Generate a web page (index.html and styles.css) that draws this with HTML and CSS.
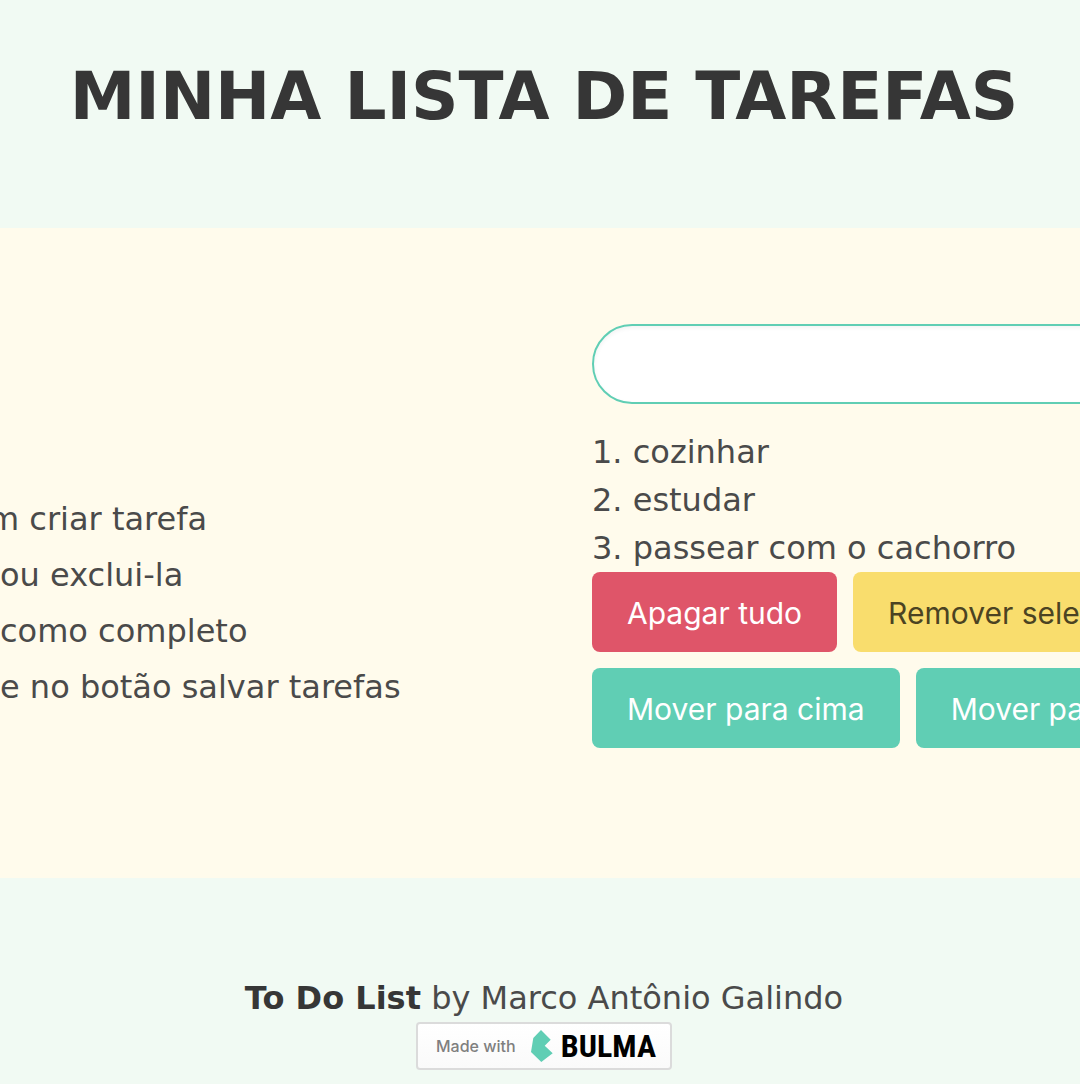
FILE: index.html
```html
<!DOCTYPE html>
<html lang="pt-BR">
<head>
<meta charset="utf-8">
<meta name="viewport" content="width=device-width, initial-scale=1">
<title>Minha Lista de Tarefas</title>
<link rel="stylesheet" href="styles.css">
</head>
<body>
<header class="hero">
  <h1 class="title">MINHA LISTA DE TAREFAS</h1>
</header>
<main class="board">
  <ul class="tips">
    <li class="tip-cut">m criar tarefa</li>
    <li>ou exclui-la</li>
    <li>como completo</li>
    <li>e no botão salvar tarefas</li>
  </ul>
  <section class="tasks">
    <input class="task-input" type="text" aria-label="Nova tarefa">
    <ol class="task-list">
      <li>cozinhar</li>
      <li>estudar</li>
      <li>passear com o cachorro</li>
    </ol>
    <div class="buttons">
      <button class="button danger" type="button">Apagar tudo</button>
      <button class="button warning" type="button">Remover sele</button>
    </div>
    <div class="buttons">
      <button class="button primary" type="button">Mover para cima</button>
      <button class="button primary" type="button">Mover pa</button>
    </div>
  </section>
</main>
<footer class="footer">
  <p class="credit"><strong>To Do List</strong> by Marco Antônio Galindo</p>
  <a class="badge" href="https://bulma.io">
    <span class="badge-note">Made with</span>
    <svg class="badge-mark" viewBox="0 0 22 32" aria-hidden="true"><path d="M2.3 8 10 0 19.7 9.7 13.7 15.7 21.7 23.3 10.3 32 0 22Z"/></svg>
    <span class="badge-name">BULMA</span>
  </a>
</footer>
</body>
</html>
```
FILE: styles.css
```css
* {
  box-sizing: border-box;
}

body {
  margin: 0;
  min-height: 100vh;
  overflow: hidden;
  background: #f1faf3;
  color: #4a4a4a;
  font-family: Verdana, "DejaVu Sans", sans-serif;
  font-size: 32px;
  line-height: 48px;
}

.hero {
  padding: 61px 0 95px 8px;
  text-align: center;
}

.title {
  margin: 0;
  color: #363636;
  font-size: 66px;
  line-height: 72px;
  white-space: nowrap;
}

.board {
  display: grid;
  grid-template-columns: 592px minmax(0, 1fr);
  padding: 96px 0 130px;
  background: #fffbec;
}

.tips {
  margin: 0;
  padding: 167px 0 0;
  list-style: none;
  line-height: 56px;
  white-space: nowrap;
}

/* the first tip starts outside the visible area */
.tip-cut {
  margin-left: -12px;
}

.task-input {
  display: block;
  width: calc(100% + 80px);
  height: 80px;
  padding: 0 32px;
  border: 2px solid #60ceb4;
  border-radius: 40px;
  background: #fff;
  box-shadow: inset 0 2px 4px rgba(10, 10, 10, 0.05);
  font: inherit;
}

.task-list {
  margin: 24px 0 0;
  padding: 0;
  list-style-position: inside;
  white-space: nowrap;
}

.buttons {
  display: flex;
  gap: 16px;
}

.buttons + .buttons {
  margin-top: 16px;
}

.button {
  flex: none;
  height: 80px;
  padding: 2px 35px 0;
  border: 0;
  border-radius: 8px;
  font-family: Inter, sans-serif;
  font-size: 30px;
  line-height: 48px;
  white-space: nowrap;
}

.danger {
  background: #df5569;
  color: #fff;
}

.warning {
  background: #f9dd6d;
  color: #4b4322;
}

.primary {
  background: #60ceb4;
  color: #fff;
}

.footer {
  display: flex;
  flex-direction: column;
  align-items: center;
  padding: 96px 0 14px 8px;
}

.credit {
  margin: 0;
  white-space: nowrap;
}

.credit strong {
  color: #363636;
}

.badge {
  display: flex;
  align-items: center;
  width: 256px;
  height: 48px;
  padding: 0 14px 0 18px;
  border: 2px solid #dbdbdb;
  border-radius: 4px;
  background: linear-gradient(#fff, #fafafa);
  color: #000;
  text-decoration: none;
}

.badge-note {
  color: #7f7f7f;
  font: 500 16px/24px Inter, sans-serif;
}

.badge-mark {
  width: 22px;
  height: 32px;
  margin: 0 8px 0 auto;
  fill: #60ceb4;
}

.badge-name {
  font: bold 32px/44px "Liberation Sans Narrow", "Roboto Condensed", "Open Sans Condensed", sans-serif;
}
```
